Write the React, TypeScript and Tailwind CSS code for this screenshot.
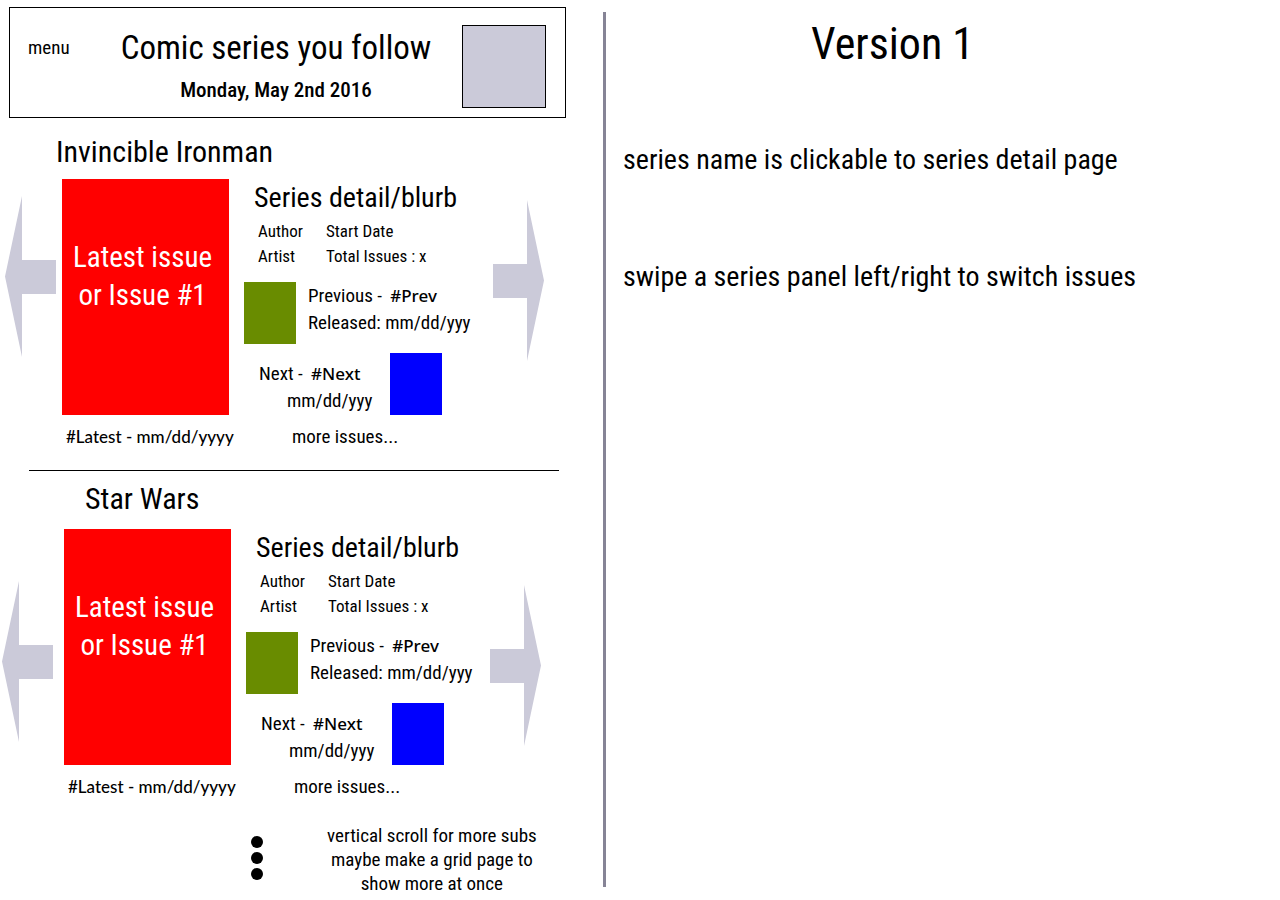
import React from "react";

type Series = {
  id: string;
  name: string;
  titleClass: string;
  rowClass: string;
  prevClass: string;
  nextClass: string;
};

const seriesList: Series[] = [
  {
    id: "ironman",
    name: "Invincible Ironman",
    titleClass: "mt-4 mb-[9px] ml-14",
    rowClass: "pl-[5px] pr-[59px]",
    prevClass: "mt-[17px] mr-[6px]",
    nextClass: "mt-[21px]",
  },
  {
    id: "starwars",
    name: "Star Wars",
    titleClass: "mt-[10px] mb-3 ml-[85px]",
    rowClass: "pl-[2px] pr-[62px]",
    prevClass: "mt-[52px] mr-[11px]",
    nextClass: "mt-14",
  },
];

function Arrow({ direction }: { direction: "left" | "right" }) {
  const points =
    direction === "left"
      ? "0,80.5 17,0 17,64 51,64 51,98 17,98 17,161"
      : "51,80.5 34,0 34,64 0,64 0,98 34,98 34,161";
  return (
    <svg width="51" height="161" viewBox="0 0 51 161" aria-hidden="true">
      <polygon points={points} fill="#cbcad9" />
    </svg>
  );
}

function SeriesPanel({ series }: { series: Series }) {
  return (
    <section aria-labelledby={series.id}>
      <h2
        id={series.id}
        className={`text-[30px] leading-9 ${series.titleClass}`}
      >
        <a href={`#${series.id}`}>{series.name}</a>
      </h2>
      <div className={`flex items-start ${series.rowClass}`}>
        <button
          type="button"
          aria-label="Previous series issue"
          className={`shrink-0 ${series.prevClass}`}
        >
          <Arrow direction="left" />
        </button>

        <figure className="w-[167px] shrink-0">
          <div className="flex h-[236px] flex-col items-center bg-[#ff0000] pt-[59px] pr-[6px] text-[29px] leading-[38px] text-white">
            <span>Latest issue</span>
            <span>or Issue #1</span>
          </div>
          <figcaption className="mt-[10px] ml-1 font-['Lato',sans-serif] text-[17px] leading-6 font-medium whitespace-nowrap">
            #Latest - mm/dd/yyyy
          </figcaption>
        </figure>

        <div className="min-w-0 flex-1 pl-[15px]">
          <h3 className="pl-[10px] text-[28px] leading-[38px]">
            Series detail/blurb
          </h3>
          <div className="grid grid-cols-[68px_1fr] pt-[2px] pl-[14px] text-[17px] leading-[25px]">
            <span>Author</span>
            <span>Start Date</span>
            <span>Artist</span>
            <span>Total Issues : x</span>
          </div>

          <div className="mt-[13px] flex gap-3 text-[19px] leading-[27px]">
            <div className="h-[62px] w-[52px] shrink-0 bg-[#698c00]" />
            <div className="whitespace-nowrap">
              <p>
                Previous -{" "}
                <span className="pl-1 font-['Noto_Sans',sans-serif] text-[17px] leading-6 font-medium">
                  #Prev
                </span>
              </p>
              <p>Released: mm/dd/yyy</p>
            </div>
          </div>

          <div className="mt-[9px] flex text-[19px] leading-[27px]">
            <div className="w-[146px] shrink-0 pt-[7px] pl-[15px]">
              <p>
                Next -{" "}
                <span className="pl-1 font-['Noto_Sans',sans-serif] text-[17px] leading-6 font-medium">
                  #Next
                </span>
              </p>
              <p className="pl-7">mm/dd/yyy</p>
            </div>
            <div className="h-[62px] w-[52px] shrink-0 bg-[#0000ff]" />
          </div>

          <a
            href={`#${series.id}-issues`}
            className="mt-[10px] ml-12 block text-[19px] leading-6"
          >
            more issues...
          </a>
        </div>

        <button
          type="button"
          aria-label="Next series issue"
          className={`shrink-0 ${series.nextClass}`}
        >
          <Arrow direction="right" />
        </button>
      </div>
    </section>
  );
}

export default function App() {
  return (
    <div className="grid min-h-screen grid-cols-[603fr_677fr] bg-white font-['Roboto_Condensed','Roboto',sans-serif] text-black">
      <main className="min-w-0">
        <header className="mt-[7px] mr-[37px] ml-[9px] grid grid-cols-[62px_1fr_84px] border border-black pt-[17px] pr-[19px] pb-[9px] pl-[18px]">
          <button
            type="button"
            className="mt-[11px] self-start text-left text-[19px] leading-6"
          >
            menu
          </button>
          <div className="text-center">
            <h1 className="text-[33px] leading-[46px]">
              Comic series you follow
            </h1>
            <p className="mt-[7px] text-[21px] leading-6 font-medium">
              Monday, May 2nd 2016
            </p>
          </div>
          <div className="h-[83px] border border-black bg-[#cbcad9]" />
        </header>

        <SeriesPanel series={seriesList[0]} />
        <hr className="mt-[21px] mr-11 ml-[29px] border-black" />
        <SeriesPanel series={seriesList[1]} />

        <footer className="mt-[25px] flex pl-[251px]">
          <div className="flex flex-col gap-1 pt-3">
            <span className="size-3 rounded-full bg-black" />
            <span className="size-3 rounded-full bg-black" />
            <span className="size-3 rounded-full bg-black" />
          </div>
          <p className="ml-16 text-center text-[19px] leading-6">
            vertical scroll for more subs
            <br />
            maybe make a grid page to
            <br />
            show more at once
          </p>
        </footer>
      </main>

      <aside className="mt-3 mb-[13px] border-l-3 border-[#868496] pl-[17px]">
        <h2 className="pt-1 pr-[118px] text-center text-[44px] leading-[56px]">
          Version 1
        </h2>
        <p className="mt-[68px] text-[28px] leading-10">
          series name is clickable to series detail page
        </p>
        <p className="mt-[77px] text-[28px] leading-10">
          swipe a series panel left/right to switch issues
        </p>
      </aside>
    </div>
  );
}
